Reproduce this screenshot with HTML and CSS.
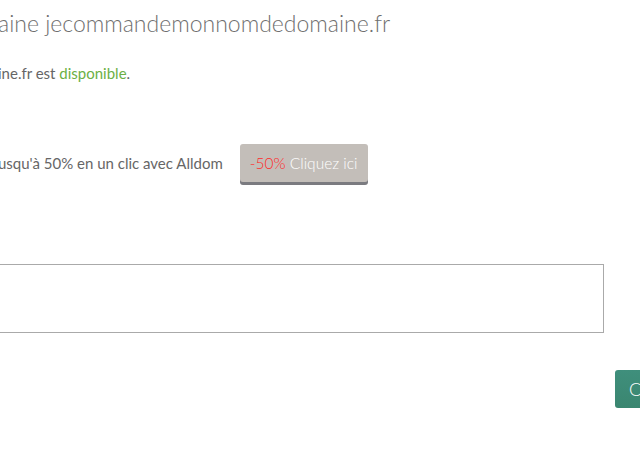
FILE: index.html
```html
<!DOCTYPE html>
<html lang="fr">
<head>
<meta charset="utf-8">
<link rel="stylesheet" href="styles.css">
</head>
<body>
<div class="page">
  <h1 class="title">aine jecommandemonnomdedomaine.fr</h1>
  <p class="status">ine.fr est <span class="ok">disponible</span>.</p>
  <div class="promo">
    <span class="promo-text">usqu'à 50% en un clic avec Alldom</span>
    <a class="promo-btn" href="#"><span class="deal">-50%</span> Cliquez ici</a>
  </div>
  <textarea class="message"></textarea>
  <div class="actions">
    <button class="submit">Commander</button>
  </div>
</div>
</body>
</html>
```
FILE: styles.css
```css
html, body {
  margin: 0;
  padding: 0;
  background: #fff;
  overflow: hidden;
  width: 640px;
  height: 452px;
}
.page {
  font-family: Lato, "Open Sans", sans-serif;
  color: #555;
  margin-left: -2px;
  width: 800px;
}
.title {
  font-weight: 300;
  font-size: 23px;
  line-height: 26px;
  color: #6f6f6f;
  margin: 10px 0 0 0;
  white-space: nowrap;
}
.status {
  font-size: 15px;
  font-weight: 400;
  line-height: 18px;
  margin: 28px 0 0 0;
  color: #666;
}
.ok { color: #6cb045; }
.promo {
  display: flex;
  align-items: center;
  gap: 17px;
  margin-top: 62px;
}
.promo-text {
  font-size: 15px;
  font-weight: 400;
  color: #666;
}
.promo-btn {
  display: inline-block;
  background: #c3beb9;
  color: #fff;
  text-decoration: none;
  font-size: 15.5px;
  font-weight: 300;
  line-height: 38px;
  padding: 0 10px;
  border-radius: 3px;
  box-shadow: 0 3px 0 #7b7b80;
}
.deal { color: #ff2a2a; }
.message {
  display: block;
  box-sizing: border-box;
  width: 606px;
  height: 69px;
  margin-top: 82px;
  border: 1px solid #aaa;
  resize: none;
  padding: 0;
}
.actions {
  margin-top: 37px;
  padding-left: 617px;
}
.submit {
  font-family: Lato, sans-serif;
  font-weight: 300;
  font-size: 18px;
  color: #fff;
  background: linear-gradient(#3f8f7c, #3a8670);
  border: 0;
  border-radius: 3px;
  height: 38px;
  padding: 0 14px;
}
```
